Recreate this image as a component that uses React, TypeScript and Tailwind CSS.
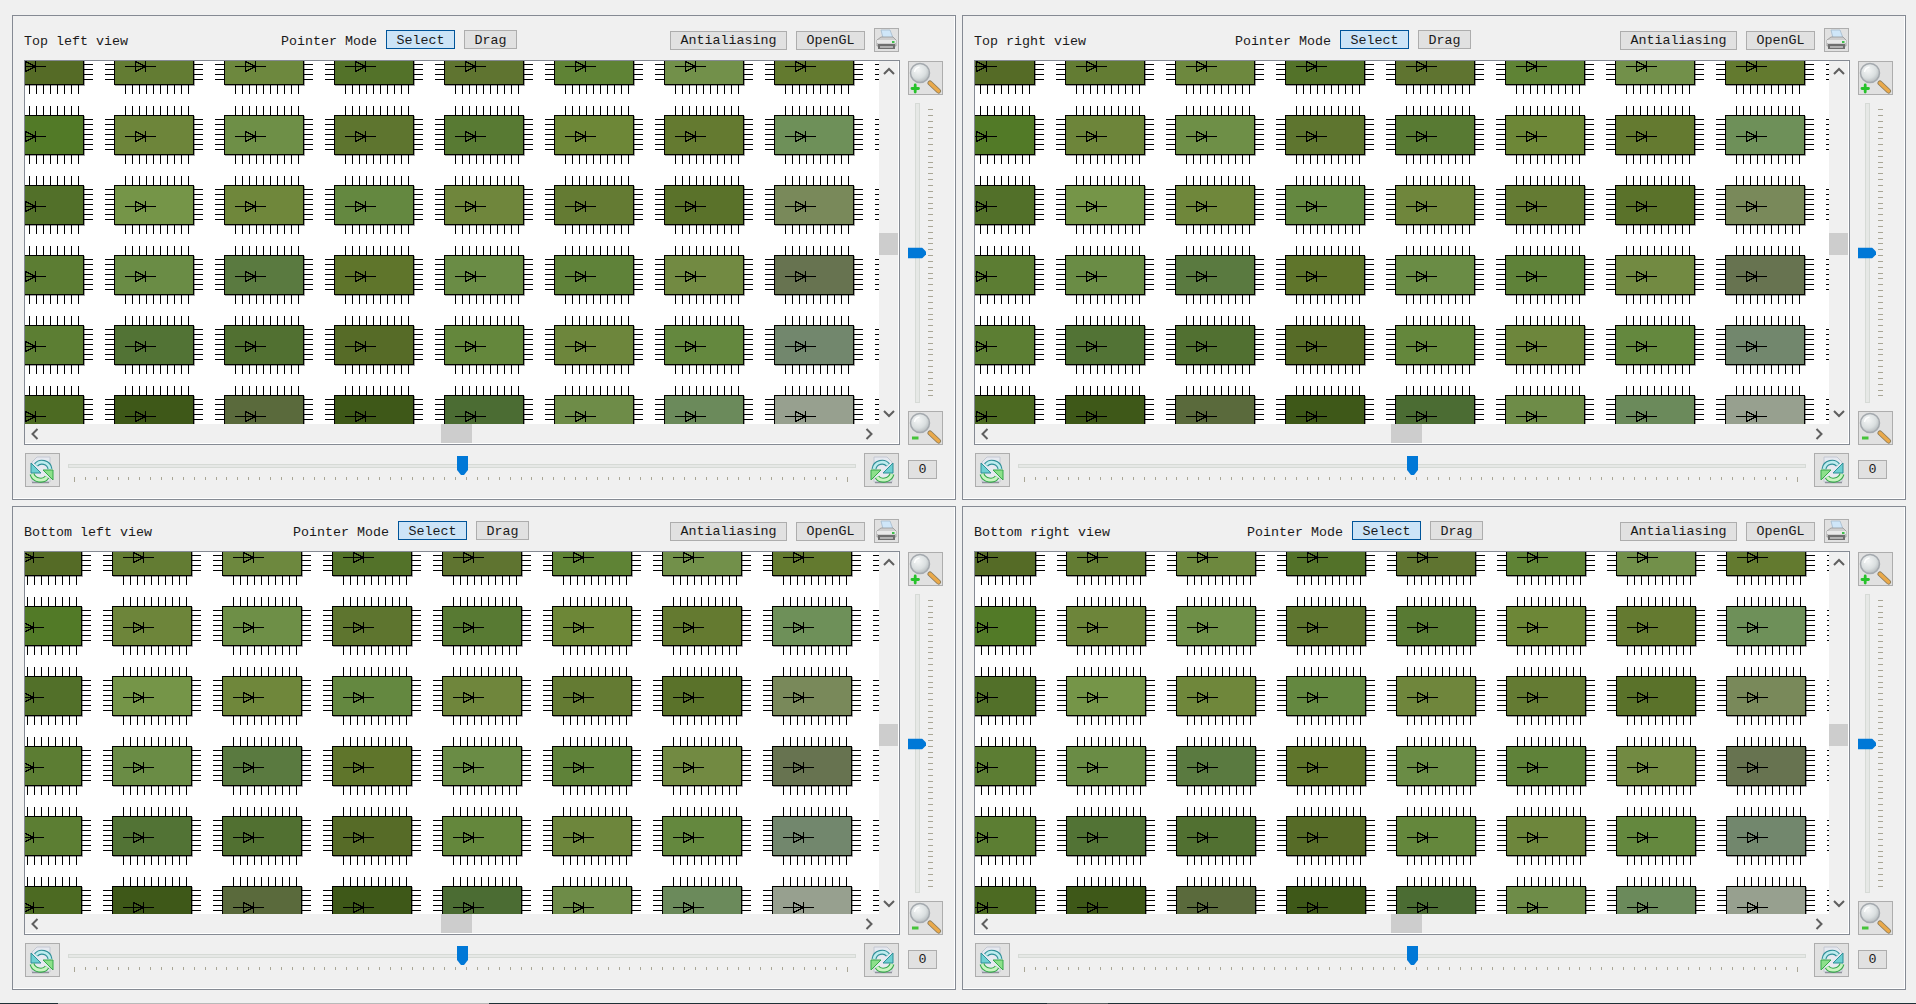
const COLORS = [
  ['#556b26', '#637c33', '#6d883e', '#537229', '#5f7430', '#5f8335', '#72904a', '#637a2f', '#5f7430'],
  ['#527a27', '#6d853a', '#6e8f47', '#5e752f', '#587a33', '#6d8737', '#647a30', '#6e9059', '#5f7430'],
  ['#527029', '#759548', '#6f873b', '#648840', '#6f863c', '#647b33', '#5a722a', '#79895a', '#5f7430'],
  ['#5c7d33', '#6a8c45', '#5a7a40', '#5f752b', '#6a8c45', '#5f8239', '#728a42', '#677350', '#5f7430'],
  ['#5c7e33', '#527335', '#517031', '#566b27', '#64873c', '#6d863c', '#64883e', '#72876d', '#5f7430'],
  ['#4c6a22', '#3e5818', '#5a6a3c', '#3e5818', '#4b6c33', '#6e8c48', '#6b8a5b', '#97a08f', '#5f7430'],
];

// the pin lines are the same for every chip
const pinPath = (() => {
  let d = '';
  for (let i = 0; i < 10; i++) {
    const x = 25.5 + 7 * i;
    d += `M${x} 5V14M${x} 54V63`;
  }
  for (let i = 0; i < 7; i++) {
    const y = 18.5 + 5 * i;
    d += `M5 ${y}H14M94 ${y}H103`;
  }
  return d;
})();

const Chip = ({color}: {color: string}) => (
  <svg width="110" height="70" viewBox="0 0 110 70" shapeRendering="crispEdges">
    <path d="M94.500 15V55M15 54.500H95" stroke="#a3a3a3" fill="none" />
    <rect x="14.500" y="14.500" width="79" height="39" fill={color} stroke="#000" />
    <path d={pinPath} stroke="#000" fill="none" />
    <path d="M25 35.500H56M35.500 30V41M45.500 30V41M35.500 30.500L45.500 35.500L35.500 40.500" stroke="#000" fill="none" />
  </svg>
);

const Chevron = ({d}: {d: string}) => (
  <svg width="12" height="12" viewBox="0 0 12 12">
    <path d={d} stroke="#5f5f5f" strokeWidth="2" fill="none" />
  </svg>
);

const MagnifierIcon = ({plus}: {plus?: boolean}) => {
  const id = plus ? 'lensIn' : 'lensOut';
  return (
    <svg width="33" height="32" viewBox="0 0 33 32">
      <defs>
        <radialGradient id={id} cx="0.4" cy="0.35" r="0.7">
          <stop offset="0" stopColor="#f4f6f6" />
          <stop offset="0.6" stopColor="#dadfe0" />
          <stop offset="1" stopColor="#b0b6b9" />
        </radialGradient>
      </defs>
      <path d="M21 21L29.500 29" stroke="#8a7a5a" strokeWidth="5" strokeLinecap="round" />
      <path d="M21 21L29.500 29" stroke="#eaa94a" strokeWidth="3.400" strokeLinecap="round" />
      <circle cx="11" cy="11" r="9.500" fill={`url(#${id})`} stroke="#a4a9ae" strokeWidth="1.500" />
      <path d="M5.500 10a6 6 0 0 1 5-5" stroke="#fff" strokeWidth="1.500" fill="none" />
      {plus ? (
        <path d="M3 26.500H9.500M6.200 23V30" stroke="#27c22b" strokeWidth="2.800" strokeLinecap="round" />
      ) : (
        <path d="M3 26H9.500" stroke="#46c43a" strokeWidth="3" />
      )}
    </svg>
  );
};

const ResetIcon = ({flip}: {flip?: boolean}) => (
  <svg width="33" height="32" viewBox="0 0 33 32" className={flip ? '-scale-x-100' : ''}>
    <path d="M9 3H22L27 8V28H9Z" fill="#e6e9f0" stroke="#c4c8d2" />
    <path d="M10 28.500H27" stroke="#8f939c" strokeWidth="1.500" />
    <path d="M9 15C10 8 19 6 23 11" stroke="#2f8f98" strokeWidth="5" fill="none" />
    <path d="M9 15C10 8 19 6 23 11" stroke="#bdecee" strokeWidth="2.800" fill="none" />
    <path d="M28 9V19H18Z" fill="#6fd0d2" stroke="#2f8f98" />
    <path d="M27 20C25 27 15 28 12 23" stroke="#35a84a" strokeWidth="5" fill="none" />
    <path d="M27 20C25 27 15 28 12 23" stroke="#c8f4c0" strokeWidth="2.800" fill="none" />
    <path d="M6 26V16H16Z" fill="#8ce08a" stroke="#35a84a" />
  </svg>
);

const PrinterIcon = () => (
  <svg width="23" height="22" viewBox="0 0 23 22">
    <path d="M6 1H15L18 9H8Z" fill="#cfe6f8" stroke="#9db4c8" strokeWidth="0.700" />
    <path d="M2 11L6 8H18L21 11V17H2Z" fill="#cfcfcf" stroke="#8d8d8d" strokeWidth="0.700" />
    <path d="M2 11H21V14H2Z" fill="#e9e9e9" />
    <path d="M3 15H20V20H3Z" fill="#6f6f6f" />
    <path d="M5 18H18" stroke="#c8c8c8" strokeWidth="1.500" />
    <rect x="17" y="12" width="2.500" height="2" fill="#3fbf4b" />
  </svg>
);

const TextButton = ({label, active}: {label: string; active?: boolean}) => (
  <div
    className={
      active
        ? 'h-[19px] px-[9.5px] pt-px border border-[#005499] bg-[#cce4f7] flex items-center'
        : 'h-[19px] px-[9.5px] pt-px border border-[#adadad] bg-[#e1e1e1] flex items-center'
    }
  >
    {label}
  </div>
);

const IconButton = ({children}: {children: React.ReactNode}) => (
  <div className="w-[35px] h-[34px] shrink-0 border border-[#adadad] bg-[#e1e1e1] flex items-center justify-center">
    {children}
  </div>
);

const HorizontalSlider = () => (
  <div className="flex-1 relative pt-[11px]">
    <div className="h-1 bg-[#e6e8e6] border border-[#d6dad6]" />
    <div className="flex justify-between items-start ml-[6px] mr-[7px] mt-[9px]">
      {Array.from({length: 72}, (_, i) => (
        <div key={i} className={i === 0 || i === 71 ? 'w-px h-[5px] bg-[#a9a696]' : 'w-px h-[3px] bg-[#a9a696]'} />
      ))}
    </div>
    <svg width="11" height="19" viewBox="0 0 11 19" className="absolute top-[3px] left-[389px]">
      <path d="M0 0H11V14L7 19H4L0 14Z" fill="#0078d7" />
    </svg>
  </div>
);

const VerticalSlider = () => (
  <div className="flex-1 relative flex pl-[7px]">
    <div className="w-[5px] bg-[#e6e8e6] border border-[#d6dad6]" />
    <div className="flex flex-col justify-between ml-[8px] pt-[6px] pb-[6px]">
      {Array.from({length: 50}, (_, i) => (
        <div key={i} className="w-[5px] h-px bg-[#a9a696]" />
      ))}
    </div>
    <svg width="18" height="11" viewBox="0 0 18 11" className="absolute left-0 top-1/2 -translate-y-1/2">
      <path d="M0 0H14L18 4V7L14 11H0Z" fill="#0078d7" />
    </svg>
  </div>
);

const ViewPanel = ({title, sceneClass}: {title: string; sceneClass: string}) => (
  <section className="border border-[#858a93] shadow-[inset_-1px_-1px_0_#fff] pl-[11px] pr-[11px] py-3 flex flex-col min-h-0">
    <header className="w-[875px] h-6 flex items-center shrink-0 mb-2 whitespace-pre">
      <span className="pt-[3px]">{title}</span>
      <div className="flex-1" />
      <div className="flex items-center gap-[9px]">
        <span className="pt-[3px]">Pointer Mode</span>
        <TextButton label="Select" active />
        <TextButton label="Drag" />
      </div>
      <div className="flex-1" />
      <div className="flex items-center gap-[9px]">
        <TextButton label="Antialiasing" />
        <TextButton label="OpenGL" />
        <div className="w-[25px] h-6 border border-[#adadad] bg-[#e1e1e1] flex items-center justify-center">
          <PrinterIcon />
        </div>
      </div>
    </header>

    <div className="flex-1 min-h-0 flex gap-2">
      <div className="w-[876px] border border-[#858a93] shadow-[inset_-1px_-1px_0_#fff] grid grid-cols-[1fr_20px] grid-rows-[1fr_20px] min-h-0">
        <div className="bg-white overflow-hidden min-h-0">
          <div className={sceneClass}>
            {COLORS.flat().map((color, i) => (
              <Chip key={i} color={color} />
            ))}
          </div>
        </div>
        <div className="flex flex-col items-center">
          <div className="h-5 flex items-center justify-center">
            <Chevron d="M1 9L6 4L11 9" />
          </div>
          <div className="flex-1 flex flex-col justify-center w-full">
            <div className="h-[22px] w-[19px] mt-[3px] bg-[#cdcdcd]" />
          </div>
          <div className="h-5 flex items-center justify-center">
            <Chevron d="M1 3L6 8L11 3" />
          </div>
        </div>
        <div className="flex items-center">
          <div className="w-5 flex justify-center">
            <Chevron d="M8.500 1L3.500 6L8.500 11" />
          </div>
          <div className="flex-1 flex justify-center self-start">
            <div className="h-[19px] w-[31px] ml-[9px] bg-[#cdcdcd]" />
          </div>
          <div className="w-5 flex justify-center">
            <Chevron d="M3.500 1L8.500 6L3.500 11" />
          </div>
        </div>
        <div />
      </div>
      <div className="w-[35px] pt-px flex flex-col gap-2">
        <IconButton>
          <MagnifierIcon plus />
        </IconButton>
        <VerticalSlider />
        <IconButton>
          <MagnifierIcon />
        </IconButton>
      </div>
    </div>

    <div className="h-[34px] mt-2 flex gap-[9px] shrink-0">
      <div className="w-[874px] ml-px flex gap-2">
        <IconButton>
          <ResetIcon flip />
        </IconButton>
        <HorizontalSlider />
        <IconButton>
          <ResetIcon />
        </IconButton>
      </div>
      <div className="w-[29px] h-[19px] mt-[7px] pt-px border border-[#adadad] bg-[#e1e1e1] flex items-center justify-center">
        0
      </div>
    </div>
  </section>
);

export default function App() {
  return (
    <div className="w-[1916px] h-[1004px] overflow-hidden flex flex-col bg-[#f0f0f0] text-[#1a1a1a] text-[13.33px] font-['Liberation_Mono',monospace]">
      <main className="grid grid-cols-[944px_944px] grid-rows-[485px_484px] gap-1.5 ml-3 mt-[15px]">
        <ViewPanel title="Top left view" sceneClass="grid grid-cols-[repeat(9,110px)] w-[990px] -ml-[35px] -mt-[30px]" />
        <ViewPanel title="Top right view" sceneClass="grid grid-cols-[repeat(9,110px)] w-[990px] -ml-[34px] -mt-[30px]" />
        <ViewPanel title="Bottom left view" sceneClass="grid grid-cols-[repeat(9,110px)] w-[990px] -ml-[37px] -mt-[30px]" />
        <ViewPanel title="Bottom right view" sceneClass="grid grid-cols-[repeat(9,110px)] w-[990px] -ml-[33px] -mt-[30px]" />
      </main>
      <div className="mt-auto h-px flex">
        <div className="w-[58px] bg-[#1f3036]" />
        <div className="w-[431px] bg-[#b9b9b9]" />
        <div className="w-[558px] bg-[#1f3036]" />
        <div className="w-[61px] bg-[#555e60]" />
        <div className="flex-1 bg-[#1f3036]" />
      </div>
    </div>
  );
}
